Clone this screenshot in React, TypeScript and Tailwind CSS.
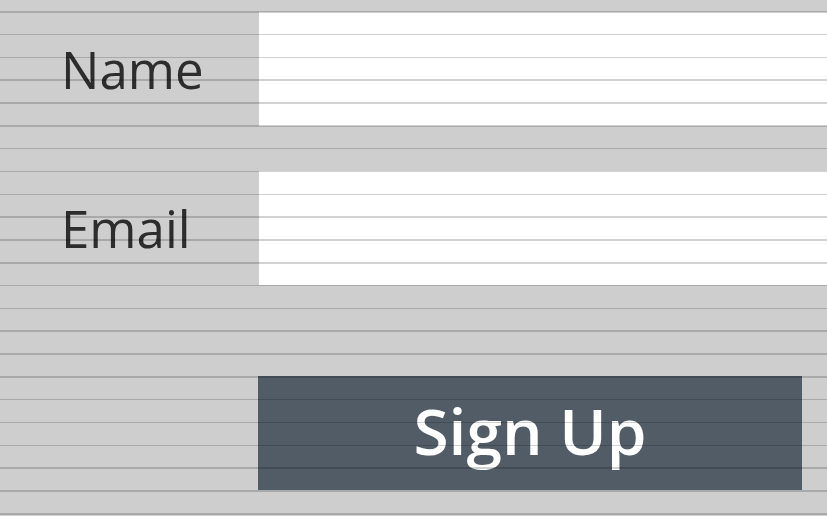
import React from 'react';

export default function App() {
  return (
    <div className="relative h-[516px] w-full overflow-hidden bg-[#cececf] font-['Open_Sans',sans-serif]">
      <div className="flex flex-col pt-[12px]">
        {/* Name row */}
        <div className="flex h-[114px]">
          <label className="flex w-[259px] items-center pl-[61px] pt-[1px] text-[51px] text-[#2d2d2d]">Name</label>
          <input className="flex-1 bg-white outline-none" type="text" />
        </div>

        {/* Email row */}
        <div className="mt-[45px] flex h-[114px]">
          <label className="flex w-[259px] items-center pl-[61px] pt-[1px] text-[51px] text-[#2d2d2d]">Email</label>
          <input className="flex-1 bg-white outline-none" type="email" />
        </div>

        <div className="mt-[91px] flex pl-[258px] pr-[25px]">
          <button className="h-[114px] flex-1 bg-[#515c67] pb-[4px] text-[64px] font-semibold text-white">
            Sign Up
          </button>
        </div>
      </div>

      {/* ruled-paper overlay */}
      <div className="pointer-events-none absolute inset-x-0 bottom-0 top-[11px] bg-[repeating-linear-gradient(to_bottom,rgba(0,0,0,0.18)_0,rgba(0,0,0,0.18)_1.5px,transparent_1.5px,transparent_22.82px)]" />
    </div>
  );
}
